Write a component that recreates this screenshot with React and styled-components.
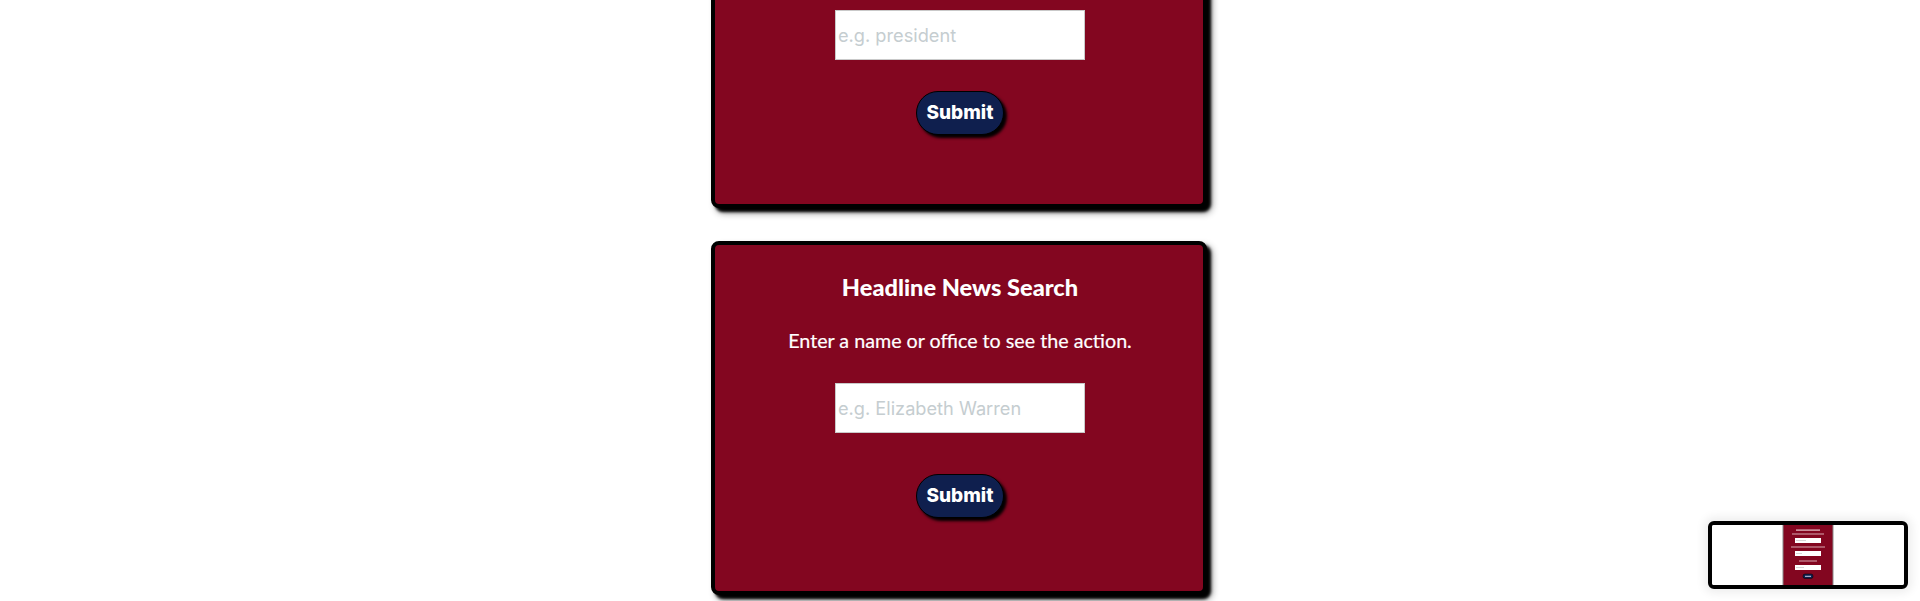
import React from "react";
import styled, { createGlobalStyle } from "styled-components";

const GlobalStyle = createGlobalStyle`
  html, body {
    margin: 0;
    padding: 0;
    background: #ffffff;
    overflow: hidden;
  }
  body {
    font-family: Lato, "Open Sans", sans-serif;
    -webkit-font-smoothing: antialiased;
  }
  * { box-sizing: border-box; }
`;

const Page = styled.main`
  display: flex;
  flex-direction: column;
  align-items: center;
  gap: 33px;
  margin-top: -132px;
  padding-bottom: 40px;
`;

const Card = styled.section`
  width: 496px;
  margin-right: 2px;
  background: #830620;
  border: 4px solid #000;
  border-radius: 8px;
  box-shadow: 4px 4px 3px #000, 5px 5px 7px rgba(0, 0, 0, 0.45);
  padding: ${(p) => p.$top}px 20px ${(p) => p.$bottom}px 22px;
  display: flex;
  flex-direction: column;
  align-items: center;
  color: #fff;
`;

const Title = styled.h2`
  margin: 0;
  font-family: Lato, sans-serif;
  font-weight: 900;
  font-size: 23.6px;
  line-height: 29px;
  color: #fff;
`;

const Subtitle = styled.p`
  margin: 27px 0 0;
  font-family: Lato, sans-serif;
  font-weight: 400;
  font-size: 19.7px;
  line-height: 24px;
  color: #fff;
  -webkit-text-stroke: 0.2px #fff;
`;

const SearchInput = styled.input`
  margin-top: ${(p) => p.$gap}px;
  width: 250px;
  height: 50px;
  border: 1px solid #c9c9c9;
  border-radius: 0;
  padding: 1px 2px;
  background: #fff;
  font-family: Inter, "Liberation Sans", sans-serif;
  font-size: 18.2px;
  color: #222;
  outline: none;
  &::placeholder {
    color: #c5cdd0;
  }
`;

const SubmitButton = styled.button`
  margin-top: ${(p) => p.$gap}px;
  height: 44px;
  padding: 0 10px;
  border: 1px solid #000;
  border-radius: 22px;
  background: #0f1f4e;
  color: #fff;
  font-family: Inter, "Liberation Sans", sans-serif;
  font-weight: 800;
  font-size: 19px;
  line-height: 22px;
  box-shadow: 3px 3px 3px #000;
  cursor: pointer;
`;

const Thumb = styled.div`
  position: fixed;
  left: 1708px;
  top: 521px;
  width: 200px;
  height: 68px;
  border: 4px solid #000;
  border-radius: 6px;
  background: #fff;
  box-shadow: 0 0 10px 4px rgba(0, 0, 0, 0.07);
  overflow: hidden;
  display: flex;
`;

function ThumbPicture() {
  return (
    <svg width="192" height="60" viewBox="0 0 192 60" aria-hidden="true">
      <rect x="0" y="0" width="192" height="60" fill="#fff" />
      <rect x="71" y="0" width="50" height="60" fill="#830620" />
      <rect x="70.5" y="0" width="1" height="60" fill="#8a8a8a" />
      <rect x="120.5" y="0" width="1" height="60" fill="#8a8a8a" />
      <rect x="84" y="4.5" width="24" height="1.2" fill="#e9c9cf" />
      <rect x="80" y="8.5" width="32" height="1" fill="#d9a9b2" />
      <rect x="83" y="13" width="26" height="5" fill="#fff" />
      <rect x="84" y="15" width="10" height="1" fill="#d6d6d6" />
      <rect x="79" y="21.5" width="34" height="1" fill="#d9a9b2" />
      <rect x="83" y="26" width="26" height="5" fill="#fff" />
      <rect x="84" y="28" width="6" height="1" fill="#d6d6d6" />
      <rect x="87" y="35.5" width="18" height="1" fill="#d9a9b2" />
      <rect x="83" y="40" width="26" height="5" fill="#fff" />
      <rect x="84" y="42" width="8" height="1" fill="#d6d6d6" />
      <rect x="91" y="49" width="10" height="4.5" rx="2" fill="#0f1f4e" stroke="#000" strokeWidth="0.5" />
      <rect x="93" y="50.8" width="6" height="1" fill="#c9cce0" />
    </svg>
  );
}

export default function App() {
  return (
    <>
      <GlobalStyle />
      <Page>
        <Card $top={138} $bottom={69}>
          <SearchInput type="text" placeholder="e.g. president" $gap={0} />
          <SubmitButton type="button" $gap={31}>Submit</SubmitButton>
        </Card>
        <Card $top={28} $bottom={73}>
          <Title>Headline News Search</Title>
          <Subtitle>Enter a name or office to see the action.</Subtitle>
          <SearchInput type="text" placeholder="e.g. Elizabeth Warren" $gap={30} />
          <SubmitButton type="button" $gap={41}>Submit</SubmitButton>
        </Card>
      </Page>
      <Thumb>
        <ThumbPicture />
      </Thumb>
    </>
  );
}
